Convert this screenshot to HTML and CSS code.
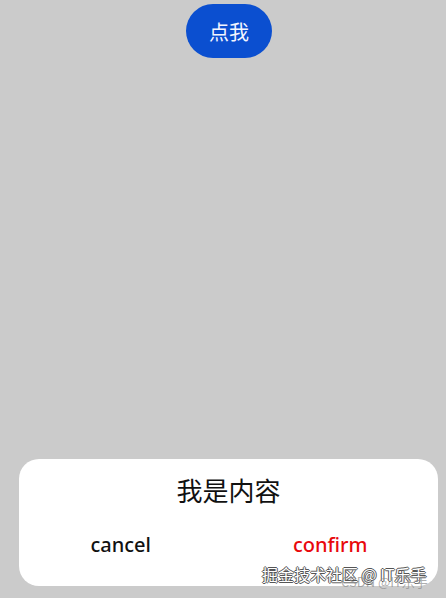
FILE: index.html
```html
<!doctype html>
<html lang="zh">
<head>
<meta charset="utf-8" />
<title>dialog</title>
<link rel="stylesheet" href="styles.css">
</head>
<body>

<div class="page">
	<button class="open-btn">点我</button>

	<div class="dialog">
		<div class="dialog-content">我是内容</div>
		<div class="dialog-actions">
			<span class="action cancel">cancel</span>
			<span class="action confirm">confirm</span>
		</div>
	</div>
</div>

<div class="watermark">
	<span class="wm-juejin">掘金技术社区 @ IT乐手</span>
	<span class="wm-csdn">CSDN @IT乐手</span>
</div>

</body>
</html>
```

FILE: styles.css
```css
html, body {
	margin: 0;
	height: 100%;
}

body {
	background-color: #cbcbcb;
	font-family: "Noto Sans", "Noto Sans CJK SC", sans-serif;
	overflow: hidden;
}

.page {
	height: 598px;
	display: flex;
	flex-direction: column;
	align-items: center;
	box-sizing: border-box;
	padding: 4px 0 12px;
}

.open-btn {
	margin-left: 12px;
	width: 86px;
	height: 54px;
	border: none;
	border-radius: 27px;
	background-color: #0b4fd0;
	color: #f4f6ff;
	font-family: "Noto Sans CJK SC", sans-serif;
	font-size: 20px;
	font-weight: 400;
	padding: 0;
}

.dialog {
	margin-top: auto;
	margin-left: 11px;
	width: 419px;
	height: 127px;
	background: #fff;
	border-radius: 20px;
	display: flex;
	flex-direction: column;
	align-items: center;
}

.dialog-content {
	margin-top: 13px;
	font-family: "Noto Sans CJK SC", sans-serif;
	font-size: 26px;
	color: #111;
	line-height: 35px;
}

.dialog-actions {
	margin-top: 25px;
	width: 100%;
	display: flex;
	padding: 0 6px 0 0;
	box-sizing: border-box;
}

.action {
	flex: 1;
	text-align: center;
	font-size: 20px;
	line-height: 26px;
	font-weight: 500;
}

.cancel {
	color: #111;
	padding-right: 6px;
}

.confirm {
	color: #e8080c;
}

.watermark {
	position: absolute;
	left: 262px;
	top: 562px;
	width: 180px;
	height: 34px;
	font-family: "Noto Sans CJK SC", sans-serif;
}

.wm-juejin {
	position: absolute;
	left: 0;
	top: 0;
	font-size: 16px;
	color: #fff;
	white-space: nowrap;
	text-shadow:
		1px 0 0 #555,
		-1px 0 0 #555,
		0 1px 0 #555,
		0 -1px 0 #555;
}

.wm-csdn {
	position: absolute;
	left: 79px;
	top: 10px;
	font-size: 13px;
	color: rgba(140, 140, 140, 0.7);
	white-space: nowrap;
}
```
